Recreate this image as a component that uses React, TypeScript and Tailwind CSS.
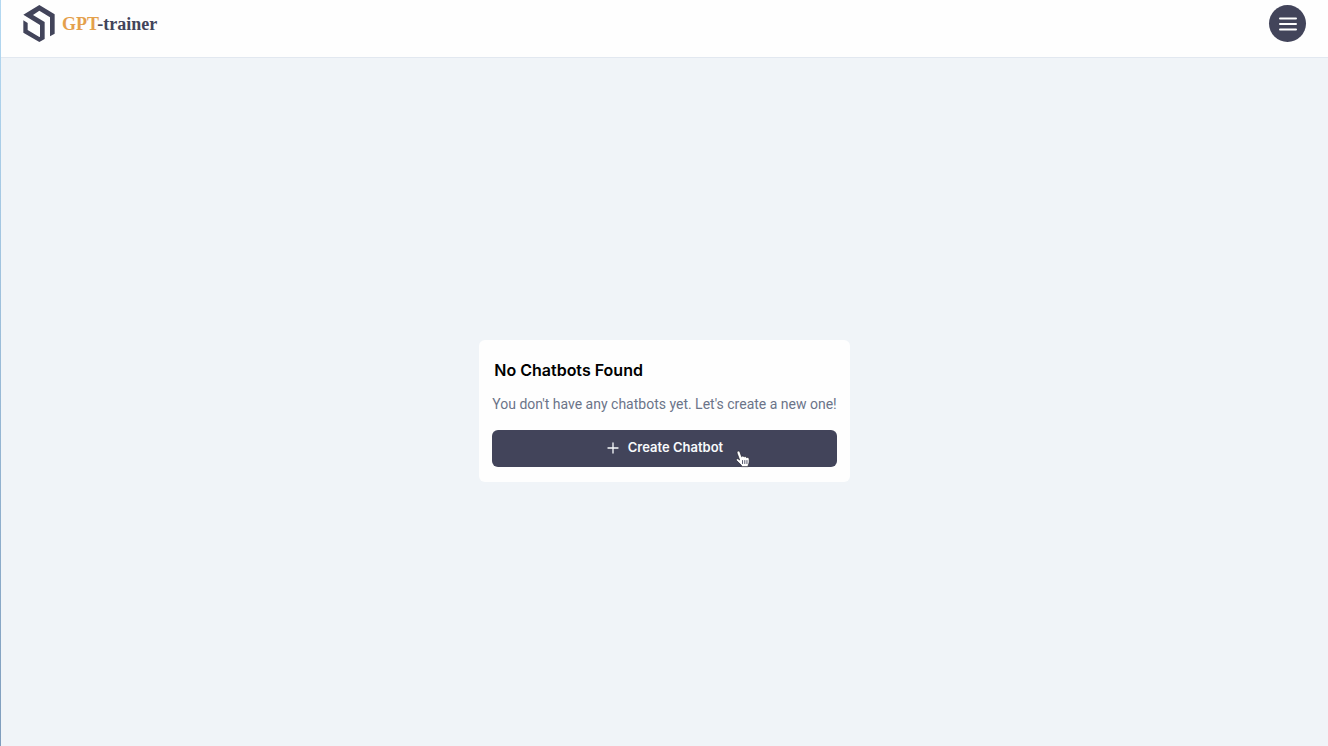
function LogoMark() {
  return (
    <svg viewBox="0 2 96 111" className="h-[37px] w-8" fill="#42445a" aria-hidden="true">
      <path d="M1 31 L49 2 L95 30 V88 L81 96 V39 L49 19 L30 32 L65 53 V104 L49 113 L1 85 V48 L14 56 V77 L49 98 L51 97 V62 Z" />
    </svg>
  );
}

function HandPointer() {
  return (
    <svg
      viewBox="0 0 14 16"
      className="pointer-events-none absolute top-5 right-[86px] h-[18px] w-4"
      aria-hidden="true"
    >
      <path
        d="M2.2 1.2 C3.2 .6 4 1.2 4.4 2.2 L5.8 6 C6.2 5.2 7.7 5.2 8 6.2 C8.7 5.6 9.9 5.8 10.2 6.8 C11.2 6.3 12.5 6.8 12.5 8.2 V10.5 C12.5 12 11.8 12.7 11.6 13.5 V14.8 H5.6 V13.6 C4.2 12.4 2.6 10.6 1.2 9.2 C.6 8.2 1.8 7.3 2.8 8 L4 8.9 L1.8 2.8 C1.6 2.1 1.7 1.5 2.2 1.2 Z"
        fill="#fff"
        stroke="#22232e"
        strokeWidth="0.6"
      />
      <path d="M6.6 9 V12.4 M8.6 9 V12.4 M10.5 9 V12.4" stroke="#42445a" strokeWidth="0.8" />
    </svg>
  );
}

export default function App() {
  return (
    <div className="flex min-h-screen bg-[#f0f4f8] font-['Inter',sans-serif]">
      <div className="w-px bg-linear-to-b from-[#b4d9f2] to-[#7f9dbd]" />
      <div className="flex flex-1 flex-col">
        <header className="flex items-start justify-between border-b border-[#e2e8f0] bg-[#fefefe] pt-[5px] pr-[22px] pb-[15px] pl-[22px]">
          <a href="#" className="flex items-center gap-[7px]">
            <LogoMark />
            <span className="font-['Liberation_Serif',serif] text-lg font-bold text-[#42445a]">
              <span className="text-[#e4a04c]">GPT</span>-trainer
            </span>
          </a>
          <button
            type="button"
            aria-label="Menu"
            className="flex h-[37px] w-[37px] items-center justify-center rounded-full bg-[#42445a]"
          >
            <svg
              viewBox="0 0 18 14"
              className="h-3.5 w-[18px]"
              stroke="#fff"
              strokeWidth="2"
              strokeLinecap="round"
              aria-hidden="true"
            >
              <path d="M1 1.5H17M1 7H17M1 12.5H17" />
            </svg>
          </button>
        </header>
        <main className="flex flex-1 items-center justify-center pt-[17px]">
          <section className="rounded-md bg-[#fefefe] px-[13px] py-[15px]">
            <h1 className="px-0.5 pt-px text-base leading-7 font-semibold text-black">
              No Chatbots Found
            </h1>
            <p className="mt-2 font-['Roboto',sans-serif] text-sm leading-6 text-[#6b7489]">
              You don't have any chatbots yet. Let's create a new one!
            </p>
            <button
              type="button"
              className="relative mt-3.5 flex h-[37px] w-full items-center justify-center gap-2 rounded-md bg-[#42445a] text-[13px] font-semibold text-[#f8fafc]"
            >
              <svg
                viewBox="0 0 14 14"
                className="h-3.5 w-3.5"
                stroke="currentColor"
                strokeWidth="1.3"
                strokeLinecap="round"
                aria-hidden="true"
              >
                <path d="M7 2V12M2 7H12" />
              </svg>
              Create Chatbot
              <HandPointer />
            </button>
          </section>
        </main>
      </div>
    </div>
  );
}
